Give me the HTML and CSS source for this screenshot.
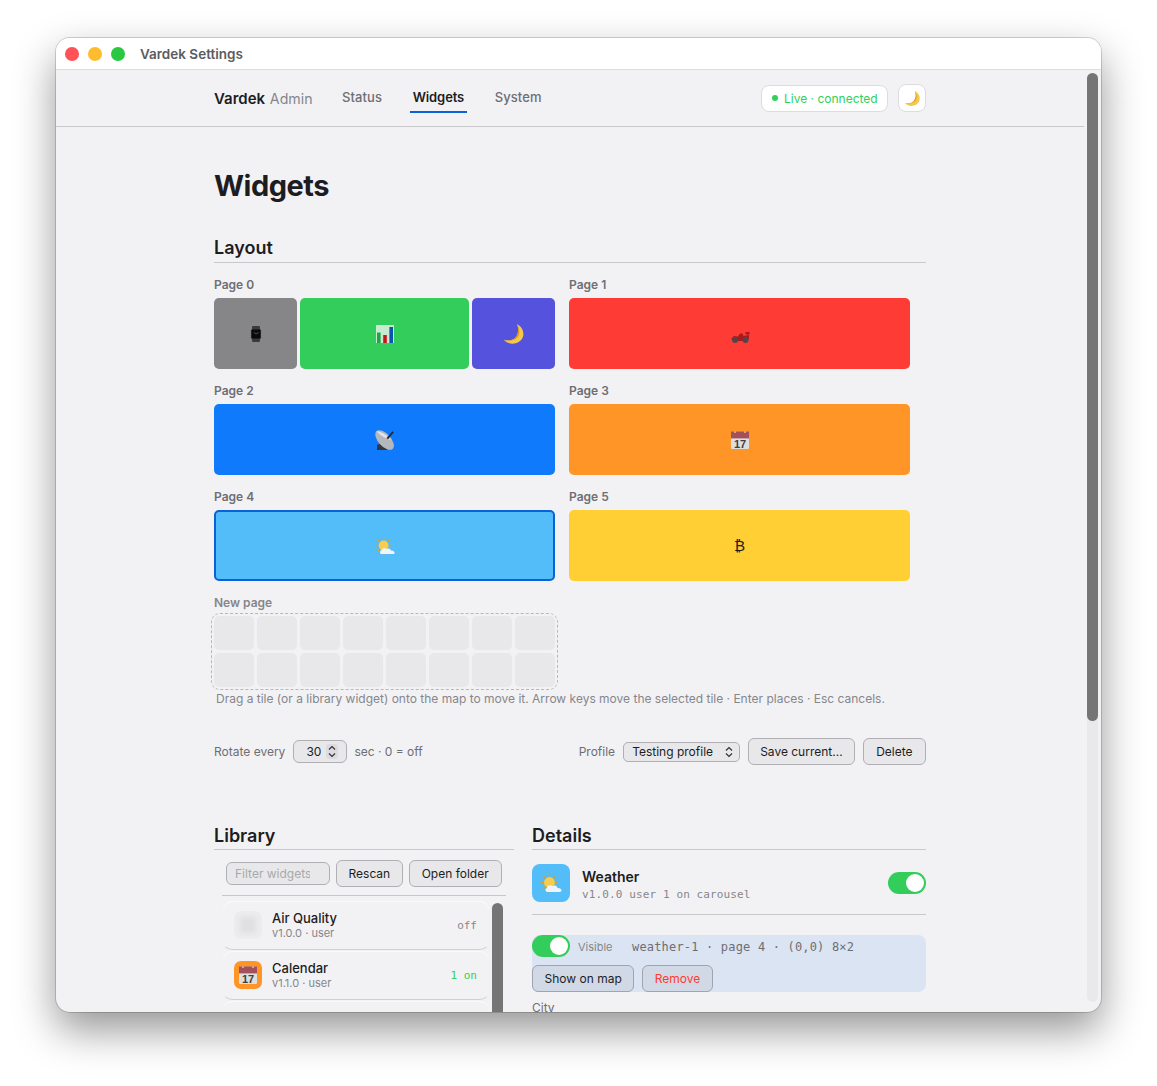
FILE: index.html
```html
<html>
<head>
  <title>Vardek Settings</title>
  <link rel="stylesheet" href="styles.css">
</head>
<body>
  <svg class="defs" width="0" height="0">
    <defs>
      <symbol id="i-watch" viewBox="0 0 20 20">
        <rect x="5.6" y="1" width="8.8" height="18" rx="1.2" fill="#3a3a3c"/>
        <rect x="4.4" y="4.4" width="11.2" height="11.2" rx="1.8" fill="#2a2a2c"/>
        <rect x="5.4" y="5.4" width="9.2" height="9.2" rx="1" fill="#0a0a0a"/>
        <path d="M10 10 L13 8.4 M10 10 L7.6 8.2" stroke="#8a8a8a" stroke-width=".6"/>
      </symbol>
      <symbol id="i-chart" viewBox="0 0 20 20">
        <rect x="1" y="1" width="18" height="18" fill="#e4eee6" fill-opacity=".85"/>
        <rect x="2" y="8.5" width="3.6" height="10.5" fill="#17a83e"/>
        <rect x="8.2" y="11" width="3.6" height="8" fill="#c8141c"/>
        <rect x="14.4" y="3" width="3.6" height="16" fill="#0b54b0"/>
      </symbol>
      <symbol id="i-moon" viewBox="0 0 20 20">
        <path d="M12.6 1 C17.5 3.5 19.6 8.5 18 13 C16 18 9.6 20 4.6 18 C3 17.3 1.8 16.4 .9 15.2 C5 16.4 9.6 15.6 12 12.4 C14.2 9.2 14.4 4.6 12.6 1 Z" fill="#f5c84c"/>
        <path d="M12.6 1 C14.4 4.6 14.2 9.2 12 12.4 C9.6 15.6 5 16.4 .9 15.2 C5.4 17 11 15.8 13.6 12.4 C15.6 9.4 15.2 4.4 12.6 1 Z" fill="#d99a1f"/>
      </symbol>
      <symbol id="i-car" viewBox="0 0 20 14">
        <path d="M1 9 L4 6 L8 6.4 L10 3.5 L12.5 3.5 L13.5 6 L19 5 L19 9 L14 11 L5 11 Z" fill="#a81a1e"/>
        <rect x="15.5" y="2" width="4" height="2.5" fill="#a81a1e"/>
        <circle cx="5" cy="10" r="3" fill="#4a4a4e"/>
        <circle cx="15.5" cy="10" r="3" fill="#4a4a4e"/>
        <circle cx="5" cy="10" r="1" fill="#8c2a2c"/>
        <circle cx="15.5" cy="10" r="1" fill="#8c2a2c"/>
      </symbol>
      <symbol id="i-dish" viewBox="0 0 20 20">
        <path d="M2 15 L7 13 L12 17 L12 20 L2 20 Z" fill="#34363b"/>
        <ellipse cx="9.6" cy="10" rx="12" ry="6.2" transform="rotate(48 9.6 10)" fill="#b4b7bd"/>
        <path d="M1.6 1 C6 1.6 12 5 16 10 C11 8.6 5 5.6 1.6 1 Z" fill="#e2e4e8"/>
        <path d="M11.5 8 L17.4 1.2 L18.8 2.6 L13 9.2 Z" fill="#26282c"/>
      </symbol>
      <symbol id="i-cal" viewBox="0 0 20 20">
        <rect x="1" y="1.4" width="18" height="17.6" rx="1" fill="#dededf"/>
        <rect x="1" y="1.4" width="18" height="7" fill="#a4505a"/>
        <rect x="4" y=".6" width="2" height="2.4" fill="#e3a35c"/>
        <rect x="14" y=".6" width="2" height="2.4" fill="#e3a35c"/>
        <text x="10" y="17.8" text-anchor="middle" class="cal-num">17</text>
      </symbol>
      <symbol id="i-weather" viewBox="0 -1.5 20 20">
        <path d="M8.6 0 V3 M8.6 13 V17.6 M.6 8 H3.6 M13.6 8 H16.4 M2.8 2.2 L5 4.4 M14.4 2.2 L12.2 4.4 M2.8 13.8 L5 11.6" stroke="#e59d1c" stroke-width="1.3"/>
        <circle cx="8.6" cy="8" r="4.9" fill="#f8cd4e"/>
        <path d="M7 16.6 C4.8 16.6 4.2 13.8 6.2 13 C6.6 10.8 9.8 9.6 11.6 11.4 C13.2 10.2 15.8 11.2 15.8 13 C18 12.8 19.8 14 19.6 15.4 C19.4 16.4 18.8 16.6 18 16.6 Z" fill="#f0f3f7"/>
      </symbol>
    </defs>
  </svg>

  <div class="window">
    <div class="titlebar">
      <span class="light red"></span>
      <span class="light yellow"></span>
      <span class="light green"></span>
      <span class="win-title">Vardek Settings</span>
    </div>

    <div class="win-body">
      <div class="page">
        <header class="topbar">
          <div class="topbar-inner">
            <div class="brand">Vardek <span>Admin</span></div>
            <nav class="nav">
              <a href="#status">Status</a>
              <a href="#widgets" class="active">Widgets</a>
              <a href="#system">System</a>
            </nav>
            <div class="live"><i></i>Live · connected</div>
            <button class="theme-btn"><svg class="icon-17"><use href="#i-moon"/></svg></button>
          </div>
        </header>

        <main class="container">
          <h1>Widgets</h1>

          <h2 class="section">Layout</h2>
          <div class="pages">
            <div class="page-box">
              <div class="page-label">Page 0</div>
              <div class="tiles">
                <div class="tile w2 gray"><svg class="icon-18"><use href="#i-watch"/></svg></div>
                <div class="tile w4 grn"><svg class="icon-20"><use href="#i-chart"/></svg></div>
                <div class="tile w2 indigo"><svg class="icon-22"><use href="#i-moon"/></svg></div>
              </div>
            </div>
            <div class="page-box">
              <div class="page-label">Page 1</div>
              <div class="tiles">
                <div class="tile w8 red-t"><svg class="icon-car"><use href="#i-car"/></svg></div>
              </div>
            </div>
            <div class="page-box">
              <div class="page-label">Page 2</div>
              <div class="tiles">
                <div class="tile w8 blue"><svg class="icon-20"><use href="#i-dish"/></svg></div>
              </div>
            </div>
            <div class="page-box">
              <div class="page-label">Page 3</div>
              <div class="tiles">
                <div class="tile w8 orange"><svg class="icon-20"><use href="#i-cal"/></svg></div>
              </div>
            </div>
            <div class="page-box">
              <div class="page-label">Page 4</div>
              <div class="tiles">
                <div class="tile w8 sky selected"><svg class="icon-20"><use href="#i-weather"/></svg></div>
              </div>
            </div>
            <div class="page-box">
              <div class="page-label">Page 5</div>
              <div class="tiles">
                <div class="tile w8 yellow"><span class="btc">₿</span></div>
              </div>
            </div>
            <div class="page-box">
              <div class="page-label new">New page</div>
              <div class="tiles empty">
                <i></i><i></i><i></i><i></i><i></i><i></i><i></i><i></i>
                <i></i><i></i><i></i><i></i><i></i><i></i><i></i><i></i>
              </div>
            </div>
          </div>
          <p class="hint">Drag a tile (or a library widget) onto the map to move it. Arrow keys move the selected tile · Enter places · Esc cancels.</p>

          <div class="controls">
            <label class="ctl-label">Rotate every</label>
            <div class="stepper">30
              <svg class="stepper-arrows" width="12" height="15" viewBox="0 0 12 15"><rect width="12" height="15" rx="3" fill="#dcdce0"/><path d="M3 5.5 L6 2.5 L9 5.5 M3 9.5 L6 12.5 L9 9.5" fill="none" stroke="#333" stroke-width="1.2"/></svg>
            </div>
            <span class="ctl-label">sec · 0 = off</span>
            <span class="ctl-label profile">Profile</span>
            <div class="select">Testing profile
              <svg width="8" height="12" viewBox="0 0 8 12"><path d="M1 4.5 L4 1.5 L7 4.5 M1 7.5 L4 10.5 L7 7.5" fill="none" stroke="#333" stroke-width="1.2"/></svg>
            </div>
            <button class="btn save">Save current...</button>
            <button class="btn del">Delete</button>
          </div>

          <div class="columns">
            <section class="library">
              <h2 class="section">Library</h2>
              <div class="toolbar">
                <div class="filter"><span>Filter widgets</span></div>
                <button class="btn rescan">Rescan</button>
                <button class="btn">Open folder</button>
              </div>
              <div class="lib-wrap">
                <div class="lib-list">
                  <div class="lib-row">
                    <div class="lib-icon faint"><b></b></div>
                    <div class="lib-text"><strong>Air Quality</strong><small>v1.0.0 · user</small></div>
                    <span class="lib-state">off</span>
                  </div>
                  <div class="lib-row">
                    <div class="lib-icon orange"><svg class="icon-20"><use href="#i-cal"/></svg></div>
                    <div class="lib-text"><strong>Calendar</strong><small>v1.1.0 · user</small></div>
                    <span class="lib-state on">1 on</span>
                  </div>
                  <div class="lib-row"></div>
                </div>
                <div class="lib-scroll"></div>
              </div>
            </section>

            <section class="details">
              <h2 class="section">Details</h2>
              <div class="det-head">
                <div class="det-icon"><svg class="icon-22"><use href="#i-weather"/></svg></div>
                <div class="det-text">
                  <strong>Weather</strong>
                  <small>v1.0.0 user 1 on carousel</small>
                </div>
                <div class="toggle"></div>
              </div>
              <div class="instance">
                <div class="inst-row">
                  <div class="toggle"></div>
                  <span class="inst-vis">Visible</span>
                  <span class="inst-id">weather-1 · page 4 · (0,0) 8×2</span>
                </div>
                <div class="inst-btns">
                  <button class="btn tint">Show on map</button>
                  <button class="btn tint danger">Remove</button>
                </div>
              </div>
              <div class="field-label">City</div>
            </section>
          </div>
        </main>
      </div>

      <div class="scrollbar"><div class="thumb"></div></div>
    </div>
  </div>
</body>
</html>
```

FILE: styles.css
```css
* {
  box-sizing: border-box;
}
html, body {
  height: 100%;
}
body {
  font-family: Inter, "Noto Sans", sans-serif;
  margin: 0;
  padding: 38px 56px 0;
  background-color: #fff;
  color: #1d1d1f;
  overflow: hidden;
}
.defs {
  position: absolute;
}
.cal-num {
  font-family: "Liberation Sans", sans-serif;
  font-size: 11px;
  font-weight: 700;
  fill: #3f3f42;
}

/* window */
.window {
  width: 1045px;
  height: 974px;
  border-radius: 14px;
  overflow: hidden;
  background-color: #f2f2f5;
  box-shadow: 0 0 0 1px rgba(0, 0, 0, .16), 0 18px 42px rgba(0, 0, 0, .42);
  display: flex;
  flex-direction: column;
}
.titlebar {
  height: 32px;
  flex: none;
  background-color: #fff;
  border-bottom: 1px solid #dedee0;
  display: flex;
  align-items: center;
  padding-left: 9px;
  gap: 9px;
}
.light {
  width: 14px;
  height: 14px;
  border-radius: 50%;
}
.light.red { background-color: #ff5257; }
.light.yellow { background-color: #febc2e; }
.light.green { background-color: #28c840; }
.win-title {
  font-size: 13.5px;
  font-weight: 600;
  color: #5c5c60;
  margin-left: 6px;
}
.win-body {
  flex: 1;
  display: flex;
  min-height: 0;
}
.page {
  flex: 1;
  min-width: 0;
}
.scrollbar {
  width: 17px;
  flex: none;
  padding: 3px 3px 10px 3px;
  position: relative;
}
.scrollbar::before {
  content: "";
  display: block;
  width: 11px;
  height: 100%;
  border-radius: 6px;
  background-color: #e9e9eb;
}
.thumb {
  position: absolute;
  top: 3px;
  left: 3px;
  width: 11px;
  height: 648px;
  border-radius: 6px;
  background-color: #757575;
}

/* header */
.topbar {
  height: 57px;
  border-bottom: 1px solid #c8c8ca;
}
.topbar-inner {
  width: 712px;
  height: 100%;
  margin: 0 auto;
  display: flex;
  align-items: center;
}
.brand {
  font-size: 15px;
  font-weight: 600;
  width: 125px;
  color: #1d1d1f;
  white-space: nowrap;
}
.brand span {
  font-size: 14.2px;
  font-weight: 400;
  color: #86868b;
  margin-left: 1px;
}
.nav {
  display: flex;
  gap: 24.5px;
  flex: 1;
  margin-bottom: 1px;
}
.nav a {
  font-size: 13px;
  font-weight: 500;
  letter-spacing: .1px;
  color: #6e6e73;
  text-decoration: none;
  padding: 0 3px;
  height: 30px;
  line-height: 29px;
  border-bottom: 2px solid transparent;
}
.nav a.active {
  color: #1d1d1f;
  font-weight: 600;
  letter-spacing: -.1px;
  border-bottom-color: #0a63d6;
}
.live {
  height: 27px;
  width: 127px;
  margin-left: auto;
  border: 1px solid #dcdcde;
  border-radius: 8px;
  background-color: #fff;
  color: #30d158;
  font-size: 12px;
  display: flex;
  align-items: center;
  padding-left: 10px;
  white-space: nowrap;
}
.live i {
  width: 6px;
  height: 6px;
  border-radius: 50%;
  background-color: #30d158;
  margin-right: 6px;
}
.theme-btn {
  width: 28px;
  height: 28px;
  margin-left: 10px;
  border: 1px solid #dcdcde;
  border-radius: 8px;
  background-color: #fff;
  padding: 0;
  display: flex;
  align-items: center;
  justify-content: center;
}

.icon-17 { width: 17px; height: 17px; }
.icon-18 { width: 18px; height: 18px; }
.icon-20 { width: 20px; height: 20px; }
.icon-22 { width: 22px; height: 22px; }
.icon-car { width: 20px; height: 14px; margin-top: 6px; }

/* main */
.container {
  width: 712px;
  margin: 0 auto;
}
h1 {
  font-size: 29px;
  line-height: 36px;
  font-weight: 700;
  margin: 41px 0 0;
  letter-spacing: -.5px;
}
.section {
  font-size: 18px;
  line-height: 23px;
  font-weight: 600;
  margin: 0;
  padding-bottom: 3px;
  border-bottom: 1px solid #c8c8ca;
}
h1 + .section {
  margin-top: 32px;
}
.pages {
  display: grid;
  grid-template-columns: 341px 341px;
  column-gap: 14px;
  row-gap: 14px;
  margin-top: 14px;
}
.page-label {
  font-size: 12px;
  line-height: 16px;
  font-weight: 600;
  color: #6e6e73;
  margin-bottom: 5px;
}
.page-label.new {
  color: #86868b;
  margin-bottom: 3px;
}
.tiles {
  display: grid;
  grid-template-columns: repeat(8, 40px);
  grid-template-rows: repeat(2, 34px);
  gap: 3px;
}
.tile {
  grid-row: span 2;
  border-radius: 5px;
  display: flex;
  align-items: center;
  justify-content: center;
}
.w2 { grid-column: span 2; }
.w4 { grid-column: span 4; }
.w8 { grid-column: span 8; }
.gray { background-color: #868689; }
.grn { background-color: #32cd5a; }
.indigo { background-color: #5552de; }
.red-t { background-color: #ff3b35; }
.blue { background-color: #0f7afc; }
.orange { background-color: #ff9427; }
.sky { background-color: #52bdf8; }
.yellow { background-color: #ffcf33; }
.selected {
  border: 2px solid #0a63d6;
}
.btc {
  font-family: "DejaVu Sans", sans-serif;
  font-size: 15px;
  color: #1d1d1f;
}
.tiles.empty {
  outline: 1px dashed #b8b8bc;
  outline-offset: 2px;
  border-radius: 6px;
  margin-top: 5px;
}
.tiles.empty i {
  background-color: #e8e8ea;
  border-radius: 5px;
}
.hint {
  font-size: 12px;
  line-height: 16px;
  color: #86868b;
  margin: 4px 0 0 2px;
  white-space: nowrap;
}

/* rotate + profile row */
.controls {
  display: flex;
  align-items: center;
  height: 27px;
  margin-top: 31px;
}
.ctl-label {
  font-size: 12px;
  color: #6e6e73;
}
.stepper {
  width: 54px;
  height: 23px;
  margin: 0 7px 0 8px;
  border: 1px solid #b0b0b4;
  border-radius: 6px;
  background-color: #e8e8ea;
  font-size: 12px;
  color: #1d1d1f;
  display: flex;
  align-items: center;
  justify-content: flex-end;
  gap: 5px;
  padding-right: 8px;
}
.profile {
  margin-left: auto;
  margin-right: 8px;
}
.select {
  width: 117px;
  height: 20px;
  border: 1px solid #b0b0b4;
  border-radius: 5px;
  background-color: #e8e8ea;
  font-size: 12px;
  display: flex;
  align-items: center;
  justify-content: space-between;
  padding: 0 6px 0 8px;
  margin-right: 8px;
}
.btn {
  font-family: inherit;
  font-size: 12px;
  height: 27px;
  padding: 0 12px;
  border: 1px solid #b0b0b4;
  border-radius: 6px;
  background-color: #e8e8ea;
  color: #1d1d1f;
  white-space: nowrap;
}
.btn.save {
  padding: 0 11px;
}
.btn.del {
  padding: 0 12.5px;
  margin-left: 8px;
}

/* library + details */
.columns {
  display: flex;
  gap: 18px;
  margin-top: 59px;
  align-items: flex-start;
}
.columns .section {
  padding-bottom: 2px;
}
.library {
  width: 300px;
  flex: none;
}
.details {
  flex: 1;
  min-width: 0;
}
.toolbar {
  display: flex;
  align-items: center;
  gap: 6px;
  margin: 0 8px 0 8px;
  padding: 10px 4px 8px;
  border-bottom: 1px solid #c8c8ca;
}
.filter {
  width: 104px;
  flex: none;
  height: 23px;
  border: 1px solid #b0b0b4;
  border-radius: 6px;
  background-color: #e8e8ea;
  font-size: 12px;
  color: #a8a8ac;
  display: flex;
  align-items: center;
  padding: 0 19px 0 8px;
  overflow: hidden;
  white-space: nowrap;
}
.filter span {
  overflow: hidden;
}
.btn.rescan {
  padding: 0 11.5px;
}
.lib-wrap {
  display: flex;
  margin: 4px 11px 0 8px;
  gap: 2px;
}
.lib-list {
  width: 268px;
}
.lib-row {
  height: 50px;
  border: 1px solid transparent;
  border-bottom-color: #d0d0d2;
  border-radius: 10px;
  box-shadow: inset 0 1px 0 #fafafb;
  display: flex;
  align-items: center;
  padding: 0 12px 0 11px;
}
.lib-icon {
  width: 28px;
  height: 28px;
  border-radius: 7px;
  flex: none;
  display: flex;
  align-items: center;
  justify-content: center;
}
.lib-icon.faint {
  background-color: #ececee;
}
.lib-icon.faint b {
  width: 16px;
  height: 16px;
  background-color: #e0e0e2;
  filter: blur(2px);
}
.lib-text {
  flex: 1;
  margin-left: 10px;
  display: flex;
  flex-direction: column;
}
.lib-text strong {
  font-size: 13px;
  line-height: 16px;
  font-weight: 500;
}
.lib-text small {
  font-size: 11px;
  line-height: 14px;
  color: #86868b;
}
.lib-state {
  font-family: "DejaVu Sans Mono", monospace;
  font-size: 11px;
  color: #86868b;
}
.lib-state.on {
  color: #30d158;
}
.lib-scroll {
  width: 11px;
  height: 120px;
  margin-top: 3px;
  border-radius: 6px;
  background-color: #757575;
}
.det-head {
  display: flex;
  align-items: center;
  height: 65px;
  padding-top: 2px;
  border-bottom: 1px solid #c8c8ca;
}
.det-icon {
  width: 38px;
  height: 38px;
  border-radius: 8px;
  background-color: #52bdf8;
  display: flex;
  align-items: center;
  justify-content: center;
  flex: none;
}
.det-text {
  flex: 1;
  margin: 3px 0 0 12px;
  display: flex;
  flex-direction: column;
  gap: 3px;
}
.det-text strong {
  font-size: 14px;
  line-height: 17px;
  font-weight: 600;
}
.det-text small {
  font-family: "DejaVu Sans Mono", monospace;
  font-size: 11px;
  line-height: 14px;
  letter-spacing: .12px;
  color: #86868b;
}
.toggle {
  width: 38px;
  height: 22px;
  border-radius: 11px;
  background-color: #32cd5a;
  position: relative;
  flex: none;
}
.toggle::after {
  content: "";
  position: absolute;
  right: 2px;
  top: 2px;
  width: 18px;
  height: 18px;
  border-radius: 50%;
  background-color: #fff;
}
.instance {
  margin-top: 20px;
  height: 57px;
  background-color: #dbe4f2;
  border-radius: 8px;
}
.inst-row {
  display: flex;
  align-items: center;
  height: 22px;
}
.inst-vis {
  font-size: 11px;
  color: #86868b;
  margin: 2px 0 0 8px;
  width: 54px;
}
.inst-id {
  font-family: "DejaVu Sans Mono", monospace;
  font-size: 12px;
  letter-spacing: .18px;
  color: #6e6e73;
  white-space: nowrap;
  margin-top: 2px;
}
.inst-btns {
  display: flex;
  gap: 8px;
  margin-top: 8px;
}
.btn.tint {
  padding: 0 11.5px;
  background-color: #d1d9e7;
  border-color: #9ea4b0;
}
.btn.danger {
  color: #ff3b30;
}
.field-label {
  font-size: 12px;
  line-height: 16px;
  color: #6e6e73;
  margin-top: 8px;
}
```
